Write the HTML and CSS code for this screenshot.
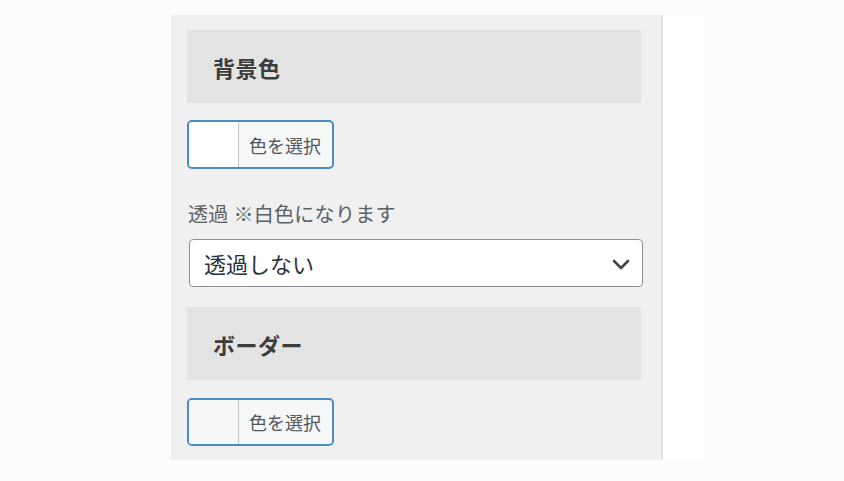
FILE: index.html
```html
<!DOCTYPE html>
<html lang="ja">
<head>
<meta charset="utf-8">
<title>背景色</title>
<link rel="stylesheet" href="styles.css">
</head>
<body>
<div class="page">
  <div class="panel">
    <div class="section-head">背景色</div>
    <button class="color-btn" type="button">
      <span class="swatch swatch-white"></span>
      <span class="color-label">色を選択</span>
    </button>
    <div class="field-label">透過 ※白色になります</div>
    <div class="select">
      <span class="select-value">透過しない</span>
      <svg class="chevron" width="18" height="11" viewBox="0 0 18 11"><path d="M2 2 L9 9 L16 2" fill="none" stroke="#3c434a" stroke-width="2.6" stroke-linecap="round" stroke-linejoin="round"/></svg>
    </div>
    <div class="section-head section-head-2">ボーダー</div>
    <button class="color-btn color-btn-2" type="button">
      <span class="swatch swatch-grey"></span>
      <span class="color-label">色を選択</span>
    </button>
  </div>
  <div class="strip"></div>
</div>
</body>
</html>
```
FILE: styles.css
```css
html, body {
  margin: 0;
  padding: 0;
}
body {
  background: #fcfcfc;
  font-family: "Noto Sans CJK JP", "Noto Sans", sans-serif;
  width: 844px;
  height: 481px;
  overflow: hidden;
}
.page {
  display: flex;
  align-items: flex-start;
  padding-left: 171px;
  padding-top: 15px;
}
.panel {
  width: 456px;
  padding: 15px 18px 14px 16px;
  background: #f0f0f0;
  border-right: 2px solid #e0e0e0;
  display: flex;
  flex-direction: column;
  align-items: flex-start;
}
.strip {
  width: 40px;
  height: 442px;
  margin-top: 3px;
  background: #ffffff;
}
.section-head {
  width: 428px;
  height: 73px;
  padding-left: 26px;
  background: #e3e3e3;
  display: flex;
  align-items: center;
  font-size: 22px;
  font-weight: 700;
  color: #3c3c3c;
  letter-spacing: 0.5px;
}
.color-btn {
  box-sizing: border-box;
  margin-top: 17px;
  width: 147px;
  height: 49px;
  padding: 0;
  display: flex;
  align-items: stretch;
  border: 2px solid #4a8cca;
  border-radius: 5px;
  background: #f6f7f7;
  overflow: hidden;
  font-family: inherit;
  cursor: pointer;
}
.swatch {
  width: 49px;
  border-right: 1px solid #c3c4c7;
}
.swatch-white {
  background: #ffffff;
}
.swatch-grey {
  background: #f5f7f7;
}
.color-label {
  flex: 1;
  display: flex;
  align-items: center;
  padding-left: 10px;
  font-size: 18px;
  color: #50575e;
}
.field-label {
  margin-top: 31px;
  font-size: 20px;
  line-height: 28px;
  color: #5a6066;
  padding-left: 1px;
  letter-spacing: 0.3px;
}
.select {
  margin-top: 11px;
  margin-left: 2px;
  width: 452px;
  height: 46px;
  border: 1px solid #8c8f94;
  border-radius: 4px;
  background: #ffffff;
  display: flex;
  align-items: center;
  justify-content: space-between;
}
.select-value {
  padding-left: 14px;
  font-size: 22px;
  color: #2c3338;
}
.chevron {
  margin-right: 12px;
  margin-top: 2px;
}
.section-head-2 {
  margin-top: 20px;
}
.color-btn-2 {
  margin-top: 18px;
  height: 48px;
}
```
